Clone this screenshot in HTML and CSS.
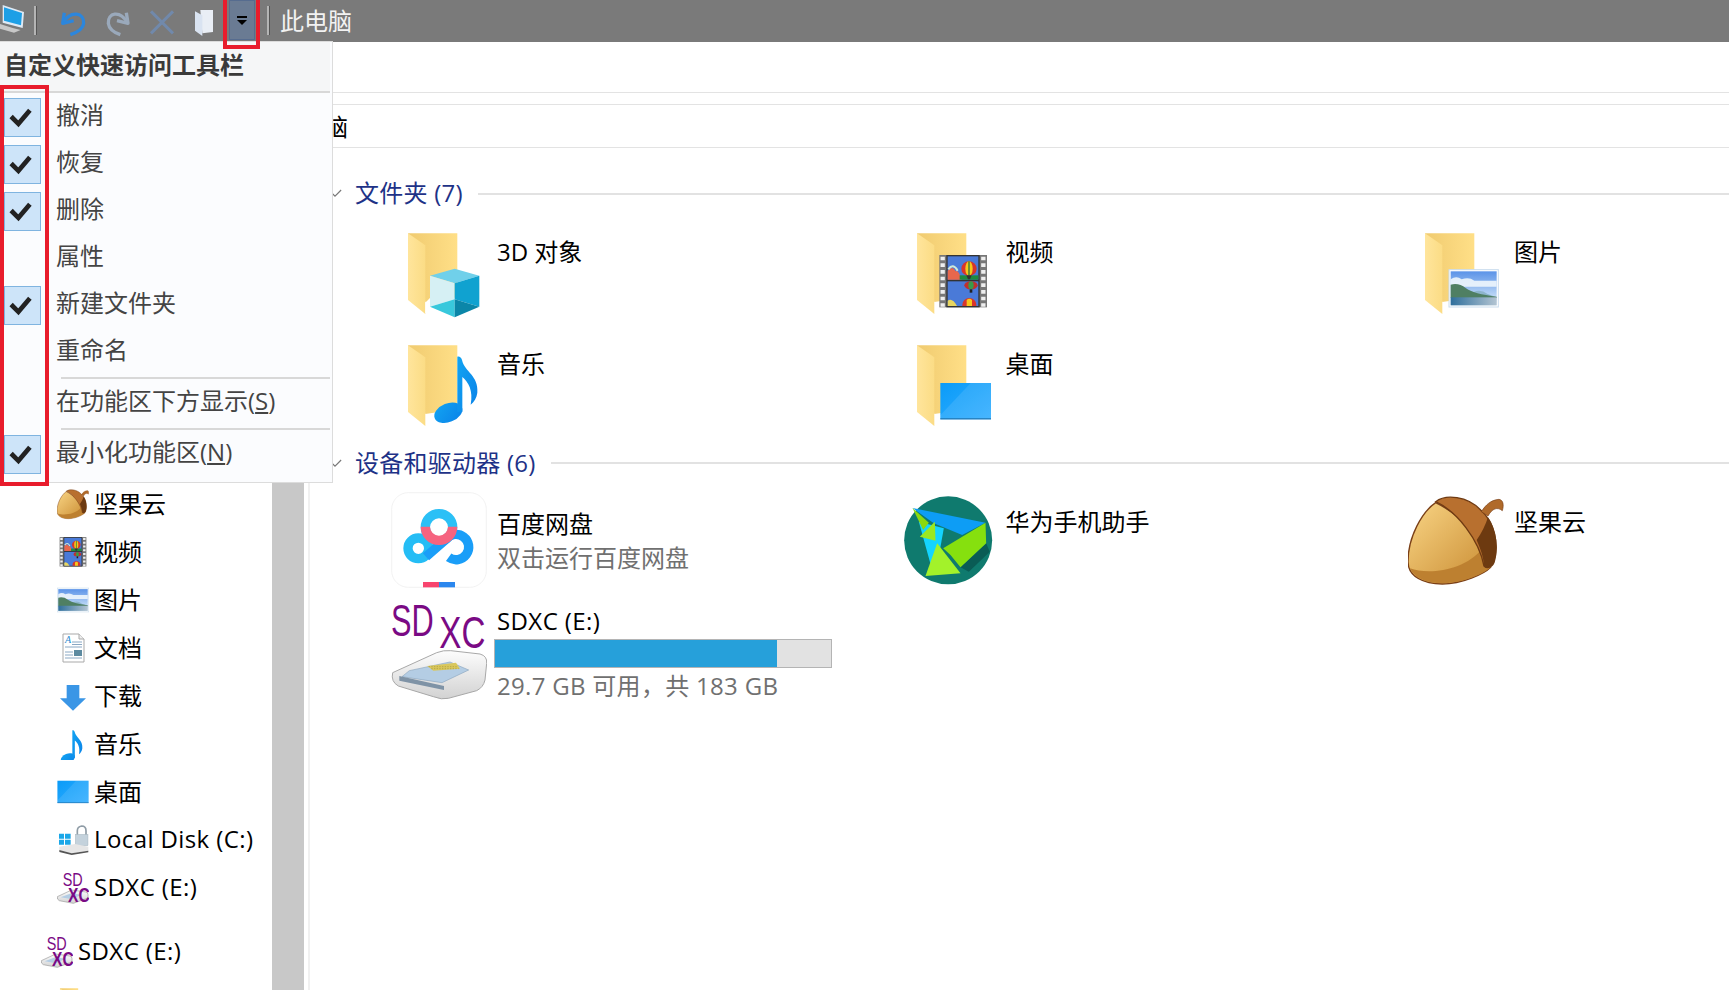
FILE: index.html
```html
<!DOCTYPE html>
<html lang="zh">
<head>
<meta charset="utf-8">
<title>此电脑</title>
<link rel="stylesheet" href="styles.css">
</head>
<body>
<svg class="defs" xmlns="http://www.w3.org/2000/svg">
  <defs>
    <linearGradient id="gBack" x1="0" y1="0" x2="1" y2="0"><stop offset="0" stop-color="#f0cb70"/><stop offset="1" stop-color="#ffdf87"/></linearGradient>
    <linearGradient id="gFront" x1="0" y1="0" x2="1" y2="0"><stop offset="0" stop-color="#ffe59c"/><stop offset="1" stop-color="#fbdc85"/></linearGradient>
    <linearGradient id="gSky" x1="0" y1="0" x2="0" y2="1"><stop offset="0" stop-color="#5b93e8"/><stop offset="1" stop-color="#e0f0fa"/></linearGradient>
    <linearGradient id="gWater" x1="0" y1="0" x2="1" y2="0"><stop offset="0" stop-color="#2f6f9c"/><stop offset="1" stop-color="#b3c4d2"/></linearGradient>
    <linearGradient id="gScreen" x1="0" y1="0" x2="1" y2="1"><stop offset="0" stop-color="#0a9bf8"/><stop offset="1" stop-color="#33aeff"/></linearGradient>
    <linearGradient id="gNote" x1="0" y1="0" x2="1" y2="1"><stop offset="0" stop-color="#12a4f2"/><stop offset="1" stop-color="#0a82e8"/></linearGradient>
    <linearGradient id="gNut" x1="0" y1="0" x2="1" y2="1"><stop offset="0" stop-color="#f9d585"/><stop offset="1" stop-color="#c88a30"/></linearGradient>
    <linearGradient id="gDrive" x1="0" y1="0" x2="0" y2="1"><stop offset="0" stop-color="#fdfdfd"/><stop offset="1" stop-color="#d2d2d2"/></linearGradient>

    <g id="folder">
      <path d="M84 70H232V262L136 276Z" fill="url(#gBack)"/>
      <path d="M84 70L136 106V312L84 270Z" fill="url(#gFront)"/>
    </g>
    <g id="cube">
      <path d="M136 278L152 262V300L136 310Z" fill="#fff"/>
      <path d="M150 197L224 176L298 197L224 220Z" fill="#70d0ea"/>
      <path d="M150 197L224 220V268L150 290Z" fill="#d6f0f4"/>
      <path d="M224 220L298 197V290L224 268Z" fill="#10a2d0"/>
      <path d="M150 290L224 268V322Z" fill="#38c8dc"/>
      <path d="M224 268L298 290L224 322Z" fill="#0b86a8"/>
    </g>
    <g id="note">
      <ellipse cx="205" cy="272" rx="44" ry="28" transform="rotate(-22 205 272)" fill="url(#gNote)"/>
      <path d="M232 104C238 102 244 106 246 114C254 150 296 160 292 212C290 228 282 240 272 248C280 205 265 180 247 165V270H232Z" fill="url(#gNote)"/>
    </g>
    <g id="film">
      <rect x="151" y="135" width="143" height="157" fill="#777"/>
      <path d="M161 140V290M283 140V290" stroke="#eee" stroke-width="13" stroke-dasharray="11 9"/>
      <rect x="172" y="135" width="100" height="157" fill="#333"/>
      <rect x="176" y="139" width="92" height="70" fill="#4a7ad8"/>
      <rect x="176" y="214" width="92" height="74" fill="#4a7ad8"/>
      <path d="M176 209V182Q190 165 200 184Q208 178 218 209Z" fill="#e8674c"/>
      <path d="M178 178Q192 158 206 182" fill="none" stroke="#cfe8d8" stroke-width="6"/>
      <rect x="212" y="196" width="56" height="13" fill="#1e8a3e"/>
      <ellipse cx="240" cy="176" rx="23" ry="22" fill="#d8352b"/>
      <ellipse cx="240" cy="176" rx="11" ry="22" fill="#f6c71c"/>
      <rect x="238" y="154" width="4" height="44" fill="#2d7a3a"/>
      <path d="M232 196H248L243 208H237Z" fill="#333"/>
      <ellipse cx="246" cy="226" rx="20" ry="12" fill="#c0302c"/>
      <ellipse cx="246" cy="226" rx="8" ry="12" fill="#3a9a4a"/>
      <path d="M242 238H250V248H242Z" fill="#222"/>
      <path d="M220 288V284A21 20 0 0 1 262 284V288Z" fill="#d8352b"/>
      <path d="M233 288V270Q241 262 249 270V288Z" fill="#f6c71c"/>
      <path d="M176 288V272Q190 262 204 288Z" fill="#e9d65f"/>
    </g>
    <g id="pic">
      <rect x="156" y="179" width="148" height="112" fill="#fff" stroke="#c9dced" stroke-width="3"/>
      <rect x="161" y="184" width="138" height="102" fill="url(#gSky)"/>
      <path d="M161 208Q178 196 194 208Q216 200 232 212H299V230H161Z" fill="#eef6fc" opacity=".9"/>
      <path d="M230 246Q250 236 272 252L299 262H230Z" fill="#8cb4cc"/>
      <path d="M161 224Q186 218 206 234Q230 252 299 260V264H161Z" fill="#4f7f63"/>
      <rect x="161" y="262" width="138" height="24" fill="url(#gWater)"/>
    </g>
    <g id="screen">
      <rect x="154" y="183" width="152" height="109" fill="url(#gScreen)"/>
      <path d="M154 280L245 183H306V292H154Z" fill="#fff" opacity=".1"/>
      <rect x="154" y="289" width="152" height="3" fill="#1c6da8"/>
    </g>
    <g id="acorn">
      <path d="M135 68C95 95 52 170 52 245C52 290 100 312 155 312C215 312 280 282 300 262L280 195C235 130 180 90 135 68Z" fill="url(#gNut)" stroke="#7a3f17" stroke-width="4"/>
      <path d="M58 265C110 285 220 275 276 205L300 262C280 282 215 310 155 310C110 310 70 295 58 265Z" fill="#bd8030"/>
      <path d="M135 65C165 42 230 48 270 90C310 125 325 190 312 240C308 262 290 268 280 258C265 180 200 95 135 65Z" fill="#b8702f" stroke="#6f3a12" stroke-width="4"/>
      <path d="M292 112C320 150 324 210 310 248C305 262 290 265 280 258C278 225 268 205 258 180C272 160 285 135 292 112Z" fill="#6d3a10"/>
      <path d="M272 95C285 75 300 60 325 58C338 60 340 75 335 92C320 80 305 85 292 108Z" fill="#b06a2a" stroke="#7a3f17" stroke-width="2"/>
    </g>
    <g id="sdcard">
      <path d="M68 578L200 518Q220 510 242 512L330 522Q352 528 350 550L345 600Q340 622 320 632L235 655Q215 660 190 650L85 618Q62 605 68 578Z" fill="url(#gDrive)" stroke="#a8a8a8" stroke-width="3"/>
      <path d="M118 572L240 546L296 570L216 608L96 590Z" fill="#b4cde4" stroke="#8ea8c0" stroke-width="2"/>
      <path d="M172 558L258 548L270 566L190 572Z" fill="#d9c75c"/>
      <path d="M176 560H262M184 566H266" stroke="#a8983c" stroke-width="2" stroke-dasharray="4 4"/>
      <path d="M88 588L222 618V630L88 602Z" fill="#7f93a6"/>
    </g>
    <g id="sdtext" class="sd-letters">
      <text x="63" y="469" font-size="132" textLength="128" lengthAdjust="spacingAndGlyphs">SD</text>
      <text x="208" y="504" font-size="132" textLength="138" lengthAdjust="spacingAndGlyphs">XC</text>
    </g>
    <g id="sdsmall">
      <path d="M172 470L215 450L258 456Q264 458 264 464V474L220 490L178 482Q170 478 172 470Z" fill="url(#gDrive)" stroke="#9a9a9a" stroke-width="2"/>
      <path d="M182 472L214 460L244 464L216 478Z" fill="#b4cde4"/>
      <g class="sd-letters">
        <text x="188" y="438" font-size="54" textLength="60" lengthAdjust="spacingAndGlyphs">SD</text>
        <text class="sd-bold" x="204" y="486" font-size="58" textLength="65" lengthAdjust="spacingAndGlyphs">XC</text>
      </g>
    </g>
  </defs>
</svg>

<div class="window">
  <header class="titlebar">
    <svg class="tb-ico tb-pc" viewBox="0 0 78 126"><path d="M8 15L72 36L68 84L8 68Z" fill="#dfeaf5"/><path d="M12 22L66 39L63 76L12 62Z" fill="#1d9fe6"/><path d="M0 72L38 84L62 90L42 98L0 86Z" fill="#c8c8c8"/></svg>
    <span class="tb-sep"></span>
    <svg class="tb-ico tb-undo" viewBox="174 0 84 126"><path d="M190 38L185 70L218 62" fill="none" stroke="#2c86dc" stroke-width="10" stroke-linejoin="round"/><path d="M188 66C210 30 250 38 248 70C246 86 226 98 208 104" fill="none" stroke="#2c86dc" stroke-width="10"/></svg>
    <svg class="tb-ico tb-redo" viewBox="312 0 84 126"><path d="M376 38L381 70L348 62" fill="none" stroke="#9aa9bb" stroke-width="10" stroke-linejoin="round"/><path d="M378 66C356 30 320 38 322 70C324 86 340 98 358 104" fill="none" stroke="#9aa9bb" stroke-width="10"/></svg>
    <svg class="tb-ico tb-x" viewBox="441 0 84 126"><path d="M450 34L516 100M516 34L450 100" stroke="#7189ab" stroke-width="9"/></svg>
    <svg class="tb-ico tb-new" viewBox="576 0 66 126"><path d="M598 30H636V96L604 100Z" fill="#e9eef5"/><path d="M582 34L604 46V108L582 92Z" fill="#d9e3f1"/></svg>
    <span class="tb-drop"><span class="tb-drop-bar"></span><span class="tb-drop-arrow"></span></span>
    <span class="tb-sep tb-sep-2"></span>
    <span class="tb-title">此电脑</span>
  </header>

  <div class="ribbon"></div>
  <div class="address">此电脑</div>

  <div class="body">
    <nav class="nav">
      <div class="nav-row"><svg class="nav-ico" viewBox="52 36 288 288"><use href="#acorn"/></svg>坚果云</div>
      <div class="nav-row"><svg class="nav-ico" viewBox="137 129 171 171"><use href="#film"/></svg>视频</div>
      <div class="nav-row"><svg class="nav-ico" viewBox="155 160 150 150"><use href="#pic"/></svg>图片</div>
      <div class="nav-row"><svg class="nav-ico" viewBox="0 0 32 32"><path d="M6 2H22L27 7V30H6Z" fill="#fff" stroke="#a9a9a9"/><path d="M22 2V7H27" fill="#eee" stroke="#a9a9a9"/><text class="doc-a" x="8" y="11" font-size="10">A</text><path d="M15 10H25M15 12.500H25M8 15H25M8 20H16M8 23H16M8 26H25" stroke="#8aa8c4"/><rect x="17" y="18" width="8" height="6" fill="#5c8aa0"/></svg>文档</div>
      <div class="nav-row"><svg class="nav-ico" viewBox="171 595 96 96"><path d="M200 610H238V650H258L219 687L180 650H200Z" fill="#3a96e6"/></svg>下载</div>
      <div class="nav-row"><svg class="nav-ico" viewBox="140 90 192 192"><use href="#note"/></svg>音乐</div>
      <div class="nav-row"><svg class="nav-ico" viewBox="152 160 156 156"><use href="#screen"/></svg>桌面</div>
      <div class="nav-row"><svg class="nav-ico" viewBox="171 252 96 96"><path d="M232 290V272Q232 260 245 258Q258 258 258 272V290" fill="none" stroke="#8f9ca6" stroke-width="5"/><rect x="226" y="283" width="38" height="34" fill="#c4d2dc" stroke="#93a3ae"/><path d="M177 281H192V296H177ZM195 281H212V296H195ZM177 299H192V314H177ZM195 299H212V314H195Z" fill="#1aa7e8"/><path d="M178 320L225 312L265 320V332L215 340L178 330Z" fill="#e6e6e6"/><path d="M178 330L215 340L265 332V337L215 345L178 336Z" fill="#555"/></svg><span class="latin">Local Disk (C:)</span></div>
      <div class="nav-row"><svg class="nav-ico" viewBox="171 396 96 96"><use href="#sdsmall"/></svg><span class="latin">SDXC (E:)</span></div>
      <div class="nav-row nav-row-root"><svg class="nav-ico" viewBox="171 396 96 96"><use href="#sdsmall"/></svg><span class="latin">SDXC (E:)</span></div>
      <div class="nav-row nav-row-last"><svg class="nav-ico" viewBox="60 60 260 260"><use href="#folder"/></svg>新建文件夹</div>
    </nav>
    <div class="scrollbar"></div>

    <main class="content">
      <section class="group">
        <h2 class="group-head"><svg class="chev" viewBox="0 0 16 10"><path d="M1 1L8 8L15 1" fill="none" stroke="#777" stroke-width="1.300"/></svg><span class="group-title">文件夹 (7)</span><span class="group-line"></span></h2>
        <div class="tiles tiles-folders">
          <div class="tile"><svg class="tile-ico" viewBox="33 42 288 288"><use href="#folder"/><use href="#cube"/></svg><div class="tile-text"><div class="name">3D 对象</div></div></div>
          <div class="tile"><svg class="tile-ico" viewBox="33 42 288 288"><use href="#folder"/><use href="#film"/></svg><div class="tile-text"><div class="name">视频</div></div></div>
          <div class="tile"><svg class="tile-ico" viewBox="33 42 288 288"><use href="#folder"/><use href="#pic"/></svg><div class="tile-text"><div class="name">图片</div></div></div>
          <div class="tile"><svg class="tile-ico" viewBox="33 42 288 288"><use href="#folder"/><use href="#note"/></svg><div class="tile-text"><div class="name">音乐</div></div></div>
          <div class="tile"><svg class="tile-ico" viewBox="33 42 288 288"><use href="#folder"/><use href="#screen"/></svg><div class="tile-text"><div class="name">桌面</div></div></div>
        </div>
      </section>
      <section class="group">
        <h2 class="group-head"><svg class="chev" viewBox="0 0 16 10"><path d="M1 1L8 8L15 1" fill="none" stroke="#777" stroke-width="1.300"/></svg><span class="group-title">设备和驱动器 (6)</span><span class="group-line"></span></h2>
        <div class="tiles tiles-devices">
          <div class="tile">
            <svg class="tile-ico" viewBox="63 36 288 288">
              <rect x="65" y="38" width="284" height="284" rx="50" fill="#fff" stroke="#ececec" stroke-width="2"/>
              <circle cx="207" cy="142" r="41" fill="none" stroke="#2bc0f6" stroke-width="28"/>
              <circle cx="145" cy="205" r="31" fill="none" stroke="#25bdf5" stroke-width="28"/>
              <path d="M168 230L228 178A38 38 0 1 1 236 232" fill="none" stroke="#1a9ef8" stroke-width="28"/>
              <path d="M166 140A41 41 0 0 0 248 140" fill="none" stroke="#f6637f" stroke-width="28"/>
              <rect x="159" y="306" width="48" height="16" fill="#f8446e"/>
              <rect x="207" y="306" width="48" height="16" fill="#2b87ee"/>
            </svg>
            <div class="tile-text tile-text-app"><div class="name">百度网盘</div><div class="sub">双击运行百度网盘</div></div>
          </div>
          <div class="tile">
            <svg class="tile-ico" viewBox="28.500 36 288 288">
              <circle cx="173" cy="181" r="132" fill="#0f7a6e"/>
              <path d="M210 262L287 190L298 215L235 275Z" fill="#0a5c55"/>
              <path d="M66 84L285 128L215 165L130 130Z" fill="#0d9df5"/>
              <path d="M85 125L160 145L150 200L125 270Z" fill="#14d4ff"/>
              <path d="M158 205L285 128L287 190L210 262L180 225Z" fill="#86e00e"/>
              <path d="M140 190L210 280L105 288Z" fill="#a3f22a"/>
              <path d="M133 125L135 182L88 170Z" fill="#9be820"/>
              <path d="M66 84L115 128L98 150Z" fill="#8bd90f"/>
            </svg>
            <div class="tile-text tile-text-plain"><div class="name">华为手机助手</div></div>
          </div>
          <div class="tile">
            <svg class="tile-ico" viewBox="52 36 288 288"><use href="#acorn"/></svg>
            <div class="tile-text tile-text-plain"><div class="name">坚果云</div></div>
          </div>
          <div class="tile">
            <svg class="tile-ico" viewBox="63 372 288 288"><use href="#sdcard"/><use href="#sdtext"/></svg>
            <div class="tile-text tile-text-drive">
              <div class="name latin">SDXC (E:)</div>
              <div class="meter"><div class="meter-fill" style="width:84%"></div></div>
              <div class="sub latin-tight">29.7 GB 可用，共 183 GB</div>
            </div>
          </div>
        </div>
      </section>
    </main>
  </div>

  <div class="menu">
    <div class="menu-head">自定义快速访问工具栏</div>
    <div class="menu-row"><span class="check on"><svg viewBox="0 0 24 24"><path d="M3 12L10 19L21 6" fill="none" stroke="#222" stroke-width="4.500"/></svg></span>撤消</div>
    <div class="menu-row"><span class="check on"><svg viewBox="0 0 24 24"><path d="M3 12L10 19L21 6" fill="none" stroke="#222" stroke-width="4.500"/></svg></span>恢复</div>
    <div class="menu-row"><span class="check on"><svg viewBox="0 0 24 24"><path d="M3 12L10 19L21 6" fill="none" stroke="#222" stroke-width="4.500"/></svg></span>删除</div>
    <div class="menu-row"><span class="check"></span>属性</div>
    <div class="menu-row"><span class="check on"><svg viewBox="0 0 24 24"><path d="M3 12L10 19L21 6" fill="none" stroke="#222" stroke-width="4.500"/></svg></span>新建文件夹</div>
    <div class="menu-row"><span class="check"></span>重命名</div>
    <div class="menu-sep menu-sep-first"></div>
    <div class="menu-row"><span class="check"></span><span>在功能区下方显示(<u>S</u>)</span></div>
    <div class="menu-sep menu-sep-second"></div>
    <div class="menu-row"><span class="check on"><svg viewBox="0 0 24 24"><path d="M3 12L10 19L21 6" fill="none" stroke="#222" stroke-width="4.500"/></svg></span><span>最小化功能区(<u>N</u>)</span></div>
  </div>
  <div class="mark mark-drop"></div>
  <div class="mark mark-checks"></div>
</div>
</body>
</html>
```

FILE: styles.css
```css
* { box-sizing: border-box; }
html, body { margin: 0; padding: 0; height: 100%; overflow: hidden; background: #fff; }
body { font-family: "Open Sans", "Noto Sans CJK SC", sans-serif; font-size: 24px; color: #000; }
.defs { display: block; width: 0; height: 0; }
.sd-letters text { font-family: "Liberation Sans", sans-serif; fill: #7a0a84; }
.sd-letters .sd-bold { font-weight: 700; }
.doc-a { font-family: "Liberation Serif", serif; font-style: italic; fill: #2a8ad0; }
.latin { letter-spacing: .4px; }
.latin-tight { letter-spacing: .3px; }

.window { position: relative; width: 1729px; height: 990px; overflow: hidden; display: flex; flex-direction: column; }

/* title bar */
.titlebar { flex: none; height: 42px; background: #7a7a7a; display: flex; align-items: flex-start; color: #f2f2f2; }
.tb-ico { display: block; height: 42px; flex: none; }
.tb-pc { width: 26px; }
.tb-undo { width: 28px; margin-left: 22px; }
.tb-redo { width: 28px; margin-left: 18px; }
.tb-x { width: 28px; margin-left: 15px; }
.tb-new { width: 22px; margin-left: 17px; }
.tb-sep { flex: none; width: 3px; height: 29px; margin: 6px 0 0 8px; background: #b4b4b4; border-right: 1px solid #555; }
.tb-drop { flex: none; width: 26px; height: 40px; margin-left: 14px; background: #6a7b93; border: 1px solid #566c8f; display: flex; flex-direction: column; align-items: center; padding-top: 15px; gap: 2px; }
.tb-drop-bar { width: 10px; height: 2px; background: #000; }
.tb-drop-arrow { width: 0; height: 0; border-left: 5px solid transparent; border-right: 5px solid transparent; border-top: 5px solid #000; }
.tb-sep-2 { margin-left: 12px; }
.tb-title { margin-left: 10px; line-height: 42px; }

/* ribbon + address */
.ribbon { flex: none; height: 51px; border-bottom: 1px solid #e3e3e3; }
.address { flex: none; height: 44px; margin-top: 11px; padding-left: 276px; line-height: 44px; border-top: 1px solid #e3e3e3; border-bottom: 1px solid #e3e3e3; }

/* body */
.body { flex: 1; min-height: 0; display: flex; }
.nav { flex: none; width: 272px; padding-top: 332px; }
.nav-row { height: 48px; padding-bottom: 4px; display: flex; align-items: center; gap: 5px; padding-left: 57px; white-space: nowrap; }
.nav-row-root { margin-top: 16px; padding-left: 41px; }
.nav-row-last { margin-top: 3px; }
.nav-ico { display: block; flex: none; width: 32px; height: 32px; margin-top: 4px; }
.scrollbar { flex: none; width: 32px; background: #c8c8c8; }
.content { flex: 1; min-width: 0; margin-left: 4px; border-left: 2px solid #f0f0f0; padding: 29px 0 0 22px; display: flex; flex-direction: column; }

.group-head { margin: 0; height: 32px; display: flex; align-items: center; font-size: 24px; font-weight: 400; }
.chev { display: block; flex: none; width: 14px; height: 9px; margin-left: -4px; margin-right: 13px; }
.group-title { color: #1e3287; line-height: 32px; white-space: nowrap; letter-spacing: .25px; }
.group-line { flex: 1; height: 2px; margin-left: 15px; background: #e2e2e2; }
.group:first-child .group-line { margin-top: 2px; }

.tiles { display: grid; grid-template-columns: repeat(3, 508.5px); grid-auto-rows: 112px; margin-left: 58px; }
.tiles-folders { margin-top: 15px; margin-bottom: -1px; }
.tiles-devices { margin-top: 13px; }
.tile { display: flex; gap: 10px; align-items: flex-start; }
.tile-ico { display: block; flex: none; width: 96px; height: 96px; margin-left: 1px; }
.tile-text { padding-top: 12px; min-width: 0; flex: 1; }
.tile-text-app { padding-top: 16px; }
.tile-text-plain { padding-top: 14px; }
.tile-text-drive { padding-top: 1px; }
.name { line-height: 32px; white-space: nowrap; }
.sub { color: #707070; line-height: 34px; white-space: nowrap; }
.tile-text-app .sub { margin-top: 1px; }
.meter { width: 338px; height: 29px; margin: 2px 0 0 -3px; background: #e2e2e2; border: 1px solid #b4b4b4; }
.meter-fill { height: 100%; background: #26a0da; }
.tile-text-drive .sub { margin-top: 1px; }

/* popup menu */
.menu { position: absolute; left: 0; top: 41px; width: 333px; height: 442px; background: #fbfcfe; border: 1px solid #dcdcdc; border-left: 0; color: #444; }
.menu-head { height: 51px; padding-left: 4px; margin-right: 2px; line-height: 45px; font-weight: 700; color: #3a3a3a; background: #f5f6f7; border-bottom: 2px solid #d8d8d8; }
.menu-row { height: 47px; padding-left: 4px; display: flex; align-items: flex-start; gap: 15px; line-height: 44px; white-space: nowrap; }
.check { flex: none; width: 37px; height: 39px; margin-top: 5px; padding: 0 4px 2px 0; display: flex; align-items: center; justify-content: center; border: 1px solid transparent; }
.check.on { background: #cde4f9; border-color: #7fb4e0; }
.check svg { display: block; width: 25px; height: 25px; }
.menu-sep { height: 2px; margin: 0 2px 0 61px; background: #d8d8d8; }
.menu-sep-first { margin-top: 2px; }
.menu-sep-second { margin-top: 2px; }

/* red annotation frames */
.mark { position: absolute; border: 4px solid #e81c2c; }
.mark-drop { left: 223px; top: -4px; width: 37px; height: 53px; }
.mark-checks { left: 0; top: 85px; width: 49px; height: 401px; }
```
